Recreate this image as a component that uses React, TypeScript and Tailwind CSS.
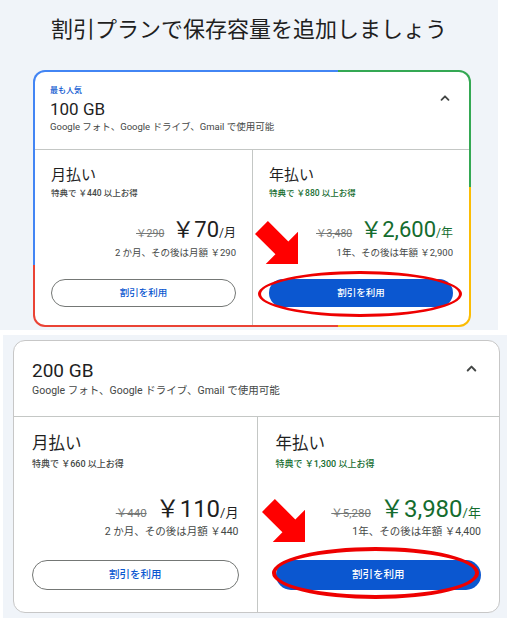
import React from 'react';

const FONT = "font-['Roboto','Noto_Sans_CJK_JP',sans-serif]";

type Size = {
  header: string;
  badge?: string;
  gb: string;
  sub: string;
  chevron: string;
  col: string;
  name: string;
  perk: string;
  priceRow: string;
  strike: string;
  price: string;
  unit: string;
  note: string;
  buttonWrap: string;
  button: string;
  ellipse: string;
  arrow: string;
};

const small: Size = {
  header: 'h-[78px] pl-[15px] pr-[18px] pt-[14px]',
  badge: 'text-[8px] leading-[10px]',
  gb: 'mt-[3px] text-[17px] leading-[20px]',
  sub: 'mt-[2px] text-[9.5px] leading-[12px]',
  chevron: 'mt-[6px] w-[12px] h-[12px]',
  col: 'px-[16px] pt-[15px]',
  name: 'text-[15px] leading-[20px]',
  perk: 'mt-[3px] text-[8.5px] leading-[11px]',
  priceRow: 'mt-[17px] h-[28px]',
  strike: 'mr-[8px] text-[10.5px]',
  price: 'text-[22px] leading-[28px]',
  unit: 'text-[12px]',
  note: 'mt-[3px] text-[9.5px] leading-[12px]',
  buttonWrap: 'mt-[20px]',
  button: 'h-[28px] text-[9.5px]',
  ellipse: 'left-[-11px] right-[-9px] top-[-8px] bottom-[-10px] border-[3px]',
  arrow: 'left-[-14px] top-[-58px] w-[43px] h-[43px]',
};

const large: Size = {
  header: 'h-[76px] pl-[18px] pr-[21px] pt-[18px]',
  gb: 'text-[19px] leading-[24px]',
  sub: 'mt-[1px] text-[10.5px] leading-[14px]',
  chevron: 'mt-[3px] w-[13px] h-[13px]',
  col: 'px-[18px] pt-[16px]',
  name: 'text-[16.5px] leading-[22px]',
  perk: 'mt-[3px] text-[9px] leading-[12px]',
  priceRow: 'mt-[24px] h-[30px]',
  strike: 'mr-[9px] text-[11.5px]',
  price: 'text-[24px] leading-[30px]',
  unit: 'text-[13px]',
  note: 'mt-[1px] text-[10.5px] leading-[13px]',
  buttonWrap: 'mt-[22px]',
  button: 'h-[30px] text-[10.5px]',
  ellipse: 'left-[-4px] right-[2px] top-[-13px] bottom-[-9px] border-[4px]',
  arrow: 'left-[-14px] top-[-61px] w-[43px] h-[43px]',
};

type Plan = {
  gb: string;
  popular?: boolean;
  month: { perk: string; was: string; price: string; note: string };
  year: { perk: string; was: string; price: string; note: string };
};

const plans: Plan[] = [
  {
    gb: '100 GB',
    popular: true,
    month: { perk: '特典で ￥440 以上お得', was: '￥290', price: '￥70', note: '2 か月、その後は月額 ￥290' },
    year: { perk: '特典で ￥880 以上お得', was: '￥3,480', price: '￥2,600', note: '1年、その後は年額 ￥2,900' },
  },
  {
    gb: '200 GB',
    month: { perk: '特典で ￥660 以上お得', was: '￥440', price: '￥110', note: '2 か月、その後は月額 ￥440' },
    year: { perk: '特典で ￥1,300 以上お得', was: '￥5,280', price: '￥3,980', note: '1年、その後は年額 ￥4,400' },
  },
];

function Chevron({ className }: { className: string }) {
  return (
    <svg className={className} viewBox="0 0 12 12" fill="none">
      <path d="M2.5 7.8 6 4.3l3.5 3.5" stroke="#444746" strokeWidth={1.8} strokeLinecap="round" strokeLinejoin="round" />
    </svg>
  );
}

// red annotation arrow pointing down-right
function RedArrow({ className }: { className: string }) {
  return (
    <svg className={`absolute ${className}`} viewBox="0 0 40 40">
      <polygon points="40,40 40,10 31,19 12,0 0,12 19,31 10,40" fill="#ff0000" />
    </svg>
  );
}

function Column({
  s,
  label,
  data,
  yearly,
}: {
  s: Size;
  label: string;
  data: Plan['month'];
  yearly?: boolean;
}) {
  const accent = yearly ? 'text-[#146c2e]' : 'text-[#1f1f1f]';
  return (
    <div className={`flex flex-col ${s.col} ${yearly ? 'border-l border-[#c4c7c5]' : ''}`}>
      <div className={`${s.name} text-[#1f1f1f]`}>{label}</div>
      <div className={`${s.perk} font-medium ${yearly ? 'text-[#146c2e]' : 'text-[#444746]'}`}>{data.perk}</div>
      <div className={`${s.priceRow} flex items-baseline justify-end`}>
        <span className={`${s.strike} text-[#747775] line-through`}>{data.was}</span>
        <span className={`${s.price} ${accent}`}>{data.price}</span>
        <span className={`${s.unit} ${accent}`}>/{yearly ? '年' : '月'}</span>
      </div>
      <div className={`${s.note} text-right text-[#444746]`}>{data.note}</div>
      <div className={`relative ${s.buttonWrap}`}>
        {yearly ? (
          <>
            <button className={`${s.button} w-full rounded-full bg-[#0b57d0] font-medium text-white`}>割引を利用</button>
            <div className={`pointer-events-none absolute rounded-[50%] border-[#ee0000] ${s.ellipse}`} />
            <RedArrow className={s.arrow} />
          </>
        ) : (
          <button className={`${s.button} w-full rounded-full border border-[#747775] bg-white font-medium text-[#0b57d0]`}>
            割引を利用
          </button>
        )}
      </div>
    </div>
  );
}

function PlanBody({ plan, s }: { plan: Plan; s: Size }) {
  return (
    <>
      <div className={`flex items-start justify-between border-b border-[#c4c7c5] ${s.header}`}>
        <div>
          {plan.popular && <div className={`${s.badge} font-medium text-[#0b57d0]`}>最も人気</div>}
          <div className={`${s.gb} text-[#1f1f1f]`}>{plan.gb}</div>
          <div className={`${s.sub} text-[#444746]`}>Google フォト、Google ドライブ、Gmail で使用可能</div>
        </div>
        <Chevron className={s.chevron} />
      </div>
      <div className="grid flex-1 grid-cols-2">
        <Column s={s} label="月払い" data={plan.month} />
        <Column s={s} label="年払い" data={plan.year} yearly />
      </div>
    </>
  );
}

export default function App() {
  return (
    <div className={`h-[618px] w-[507px] overflow-hidden bg-white ${FONT}`}>
      <section className="h-[330px] w-[498px] bg-[#f0f4f9] pt-[15px]">
        <h1 className="text-center text-[22px] leading-[30px] text-[#1f1f1f]">割引プランで保存容量を追加しましょう</h1>
        <div className="ml-[33px] mt-[25px] h-[257px] w-[438px] rounded-[12px] bg-[image:conic-gradient(from_0deg_at_50%_50%,#4285f4_0deg_34deg,#34a853_34deg_87deg,#fbbc04_87deg_146deg,#ea4335_146deg_253deg,#4285f4_253deg)] p-[2px]">
          <div className="flex h-full flex-col rounded-[10px] bg-white">
            <PlanBody plan={plans[0]} s={small} />
          </div>
        </div>
      </section>
      <section className="ml-[3px] mt-[5px] h-[283px] w-[504px] bg-[#f0f4f9] pl-[10px] pt-[5px]">
        <div className="flex h-[273px] w-[487px] flex-col rounded-[12px] border border-[#c7c7c7] bg-white">
          <PlanBody plan={plans[1]} s={large} />
        </div>
      </section>
    </div>
  );
}
